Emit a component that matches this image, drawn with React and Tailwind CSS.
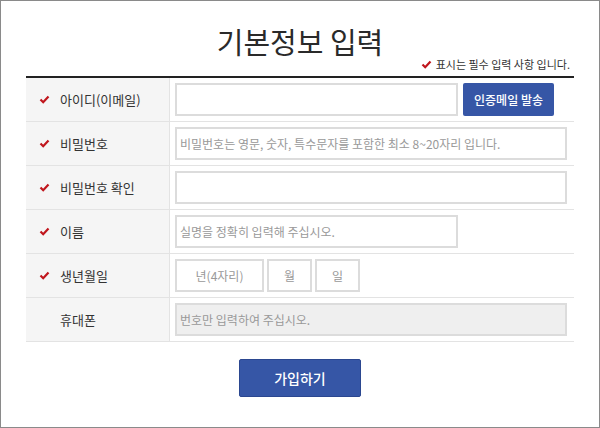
const F = { fontFamily: '"Noto Sans CJK KR","Noto Sans",sans-serif' };

function Check() {
  return (
    <svg width="11" height="9" viewBox="0 0 11 9" className="shrink-0">
      <path d="M1.5 4.5 L4.2 7.2 L9.5 1.5" stroke="#c0161d" strokeWidth="2.2" fill="none" />
    </svg>
  );
}

function Row({ label, req, children }) {
  return (
    <div className="flex h-[44px] border-b border-[#e3e3e3]">
      <div className="w-[144px] bg-[#f5f5f5] border-r border-[#e3e3e3] flex items-center pl-[13px] gap-[10px] text-[13px] text-[#333]">
        {req ? <Check /> : <span className="w-[11px]" />}
        <span>{label}</span>
      </div>
      <div className="flex-1 flex items-center pl-[5px] gap-[4px]">{children}</div>
    </div>
  );
}

const inp = "h-[33px] border-2 border-[#dcdcdc] text-[12px] text-[#999] flex items-center px-[3px]";

export default function App() {
  return (
    <div style={F} className="w-[600px] h-[428px] border border-[#8a8a8a] bg-white box-border flex flex-col items-center">
      <div className="w-[548px]">
        <div className="h-[75px] relative">
          <div className="absolute left-0 right-0 top-[20px] text-center text-[29px] font-normal text-[#2a2a2a] leading-[40px]">기본정보 입력</div>
          <div className="absolute right-[4px] top-[55px] flex items-center gap-[4px] text-[11px] text-[#333]">
            <Check /> <span>표시는 필수 입력 사항 입니다.</span>
          </div>
        </div>
        <div className="border-t-2 border-[#222]">
          <Row label="아이디(이메일)" req>
            <div className={inp + " bg-white w-[283px]"} />
            <div className="ml-[1px] w-[91px] h-[33px] bg-[#3656a6] rounded-[2px] text-white text-[12px] font-medium flex items-center justify-center">인증메일 발송</div>
          </Row>
          <Row label="비밀번호" req>
            <div className={inp + " bg-white w-[392px]"}>비밀번호는 영문, 숫자, 특수문자를 포함한 최소 8~20자리 입니다.</div>
          </Row>
          <Row label="비밀번호 확인" req>
            <div className={inp + " bg-white w-[392px]"} />
          </Row>
          <Row label="이름" req>
            <div className={inp + " bg-white w-[283px]"}>실명을 정확히 입력해 주십시오.</div>
          </Row>
          <Row label="생년월일" req>
            <div className={inp + " bg-white w-[89px] justify-center"}>년(4자리)</div>
            <div className={inp + " bg-white w-[45px] justify-center -ml-[1px]"}>월</div>
            <div className={inp + " bg-white w-[45px] justify-center -ml-[1px]"}>일</div>
          </Row>
          <Row label="휴대폰">
            <div className={inp + " w-[392px] bg-[#efefef]"}>번호만 입력하여 주십시오.</div>
          </Row>
        </div>
        <div className="flex justify-center mt-[17px]">
          <div className="w-[122px] h-[38px] bg-[#3656a6] border border-[#2b4790] rounded-[2px] text-white text-[14px] font-medium flex items-center justify-center">가입하기</div>
        </div>
      </div>
    </div>
  );
}
